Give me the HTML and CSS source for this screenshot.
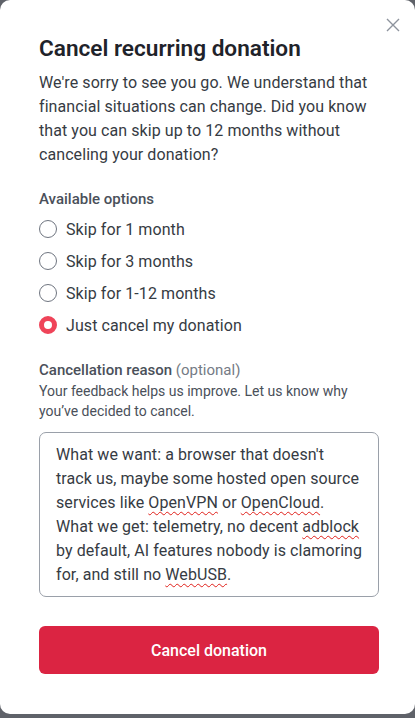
FILE: index.html
```html
<!DOCTYPE html>
<html lang="en">
<head>
<meta charset="utf-8">
<title>Cancel recurring donation</title>
<link rel="stylesheet" href="styles.css">
</head>
<body>
<div class="modal">
  <button class="close" aria-label="Close">
    <svg width="14" height="14" viewBox="0 0 14 14"><path d="M1 1L13 13M13 1L1 13" stroke="#8d939d" stroke-width="1.4" fill="none"/></svg>
  </button>
  <h1 class="title">Cancel recurring donation</h1>
  <p class="intro">We're sorry to see you go. We understand that financial situations can change. Did you know that you can skip up to 12 months without canceling your donation?</p>
  <div class="section-label">Available options</div>
  <div class="options">
    <label class="option"><span class="radio"></span><span class="opt-text">Skip for 1 month</span></label>
    <label class="option"><span class="radio"></span><span class="opt-text">Skip for 3 months</span></label>
    <label class="option"><span class="radio"></span><span class="opt-text">Skip for 1-12 months</span></label>
    <label class="option"><span class="radio checked"></span><span class="opt-text">Just cancel my donation</span></label>
  </div>
  <div class="section-label reason">Cancellation reason <span class="optional">(optional)</span></div>
  <p class="help">Your feedback helps us improve. Let us know why you’ve decided to cancel.</p>
  <div class="textbox">What we want: a browser that doesn't
track us, maybe some hosted open source services like <span class="sp">OpenVPN</span> or <span class="sp">OpenCloud</span>.
What we get: telemetry, no decent <span class="sp">adblock</span> by default, AI features nobody is clamoring for, and still no <span class="sp">WebUSB</span>.</div>
  <button class="primary">Cancel donation</button>
</div>
</body>
</html>
```
FILE: styles.css
```css
* { box-sizing: border-box; }
html, body { margin: 0; padding: 0; }
body {
  background: #5f6269;
  font-family: Roboto, "Liberation Sans", sans-serif;
  color: #363b43;
  width: 415px;
  height: 718px;
  overflow: hidden;
}
.modal {
  position: relative;
  width: 415px;
  height: 714px;
  background: #ffffff;
  border-radius: 10px;
  padding: 35px 36px 0 39px;
  display: flex;
  flex-direction: column;
}
.close {
  position: absolute;
  top: 18px;
  right: 15px;
  width: 14px;
  height: 14px;
  padding: 0;
  border: 0;
  background: none;
  display: flex;
}
.title {
  margin: 0;
  font-size: 22.6px;
  line-height: 28px;
  font-weight: 600;
  color: #1f232a;
}
.intro {
  margin: 8px 0 0;
  font-size: 16px;
  line-height: 24px;
  letter-spacing: 0.08px;
}
.section-label {
  margin-top: 21px;
  font-size: 15px;
  line-height: 22px;
  font-weight: 500;
  color: #4a505a;
}
.options {
  margin-top: 3px;
  display: flex;
  flex-direction: column;
}
.option {
  height: 32px;
  display: flex;
  align-items: center;
  gap: 9px;
  font-size: 16px;
  letter-spacing: 0.08px;
}
.radio {
  width: 18px;
  height: 18px;
  border-radius: 50%;
  border: 1.5px solid #6f7580;
  background: #fff;
  flex: none;
}
.radio.checked {
  border: 5.5px solid #ef4459;
}
.reason { margin-top: 18px; }
.optional { font-weight: 400; color: #757b85; }
.help {
  margin: 0;
  font-size: 14px;
  line-height: 20px;
  color: #4a505a;
}
.textbox {
  margin-top: 11px;
  height: 165px;
  border: 1px solid #9aa0a9;
  border-radius: 7px;
  padding: 10px 12px 10px 16px;
  font-size: 16px;
  line-height: 24px;
  letter-spacing: 0.08px;
  white-space: pre-wrap;
  color: #363b43;
}
.sp {
  text-decoration: underline wavy #e0201a;
  text-decoration-thickness: 1px;
  text-underline-offset: 3px;
}
.primary {
  margin-top: 29px;
  height: 48px;
  border: 0;
  border-radius: 6px;
  background: #db2442;
  color: #fff;
  font-family: inherit;
  font-size: 16px;
  font-weight: 500;
}
```
